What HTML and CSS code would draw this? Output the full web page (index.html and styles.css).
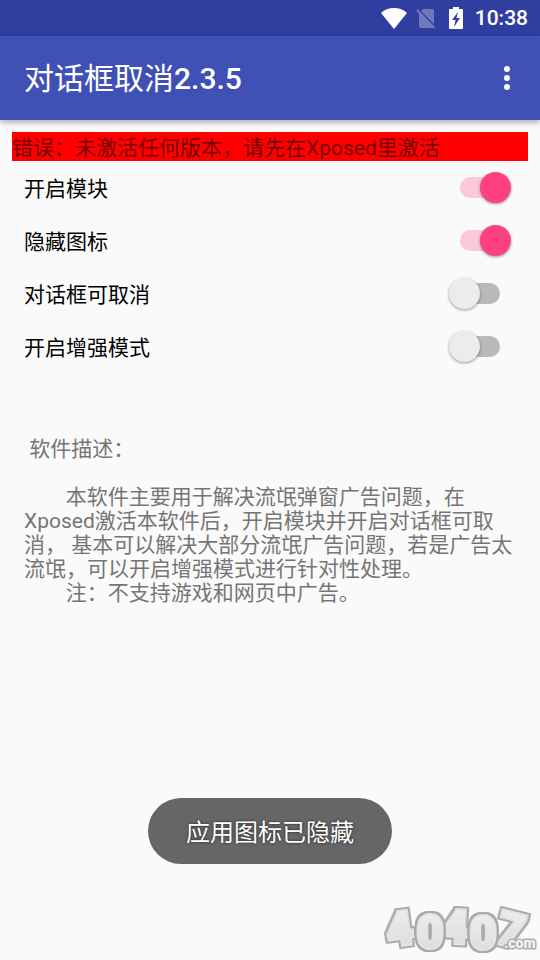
FILE: index.html
```html
<!DOCTYPE html>
<html lang="zh-CN">
<head>
<meta charset="utf-8">
<meta name="viewport" content="width=device-width, initial-scale=1">
<title>对话框取消2.3.5</title>
<link rel="stylesheet" href="styles.css">
</head>
<body>
<div class="status-bar">
  <svg class="wifi" viewBox="0 0 26 21" aria-hidden="true"><path d="M13 21 0 5Q5 0 13 0T26 5Z"/></svg>
  <svg class="no-sim" viewBox="0 0 20 21" aria-hidden="true"><path d="M7 1H16Q18 1 18 3V16L5 3ZM3 5 18 20H5Q3 20 3 18Z"/><path class="slash" d="M.8 2 18.5 20"/></svg>
  <svg class="battery" viewBox="0 0 14 22" aria-hidden="true"><path fill-rule="evenodd" d="M4 0H10V2H13Q14 2 14 3V21Q14 22 13 22H1Q0 22 0 21V3Q0 2 1 2H4ZM9 5 3 13H6.500L5 20 11 11H7.500Z"/></svg>
  <time class="clock">10:38</time>
</div>
<header class="app-bar">
  <h1 class="title">对话框取消<span class="version">2.3.5</span></h1>
  <button class="menu" type="button" aria-label="更多选项">
    <svg viewBox="0 0 6 24" aria-hidden="true"><circle cx="3" cy="3" r="3"/><circle cx="3" cy="12" r="3"/><circle cx="3" cy="21" r="3"/></svg>
  </button>
</header>
<main class="content">
  <p class="error">错误：未激活任何版本，请先在Xposed里激活</p>
  <div class="row"><label for="module">开启模块</label><input class="switch" id="module" type="checkbox" checked></div>
  <div class="row"><label for="hide-icon">隐藏图标</label><input class="switch" id="hide-icon" type="checkbox" checked></div>
  <div class="row"><label for="cancelable">对话框可取消</label><input class="switch" id="cancelable" type="checkbox"></div>
  <div class="row"><label for="enhanced">开启增强模式</label><input class="switch" id="enhanced" type="checkbox"></div>
  <p class="description"> 软件描述：

        本软件主要用于解决流氓弹窗广告问题，在Xposed激活本软件后，开启模块并开启对话框可取消， 基本可以解决大部分流氓广告问题，若是广告太流氓，可以开启增强模式进行针对性处理。
        注：不支持游戏和网页中广告。</p>
</main>
<div class="toast" role="status">应用图标已隐藏</div>
<svg class="brand" viewBox="0 0 160 60" role="img" aria-label="40407.com">
  <defs>
    <linearGradient id="silver" x1="0" y1="0" x2="0" y2="1">
      <stop offset="0" stop-color="#f0f0f0"/><stop offset="1" stop-color="#dadada"/>
    </linearGradient>
  </defs>
  <g class="digits">
    <text x="20" y="45" transform="rotate(-8 20 32)">4</text>
    <text x="75" y="43" transform="rotate(3 75 30)">4</text>
    <text x="131" y="46" transform="rotate(14 131 30)">7</text>
    <text x="50" y="48">0</text>
    <text x="103" y="49">0</text>
  </g>
  <text class="domain" x="124" y="48">.com</text>
</svg>
</body>
</html>
```
FILE: styles.css
```css
* {
  box-sizing: border-box;
}

body {
  position: relative;
  min-height: 100vh;
  margin: 0;
  background: #fafafa;
  color: #000;
  font: 21px/24px Roboto, "Noto Sans CJK SC", sans-serif;
}

.status-bar {
  display: flex;
  align-items: center;
  justify-content: flex-end;
  height: 36px;
  padding-right: 12px;
  background: #303f9f;
  color: #fff;
  fill: #fff;
}

.wifi {
  width: 26px;
  height: 21px;
  margin-right: 9px;
}

.no-sim {
  width: 20px;
  height: 21px;
  margin-right: 13px;
  opacity: .3;
}

.slash {
  stroke: #fff;
  stroke-width: 2;
}

.battery {
  width: 14px;
  height: 22px;
  margin-right: 12px;
}

.clock {
  font-weight: 500;
}

.app-bar {
  display: flex;
  align-items: center;
  justify-content: space-between;
  height: 84px;
  padding: 0 18px 0 24px;
  background: #3f51b5;
  color: #fff;
  box-shadow: 0 2px 6px rgba(0, 0, 0, .35);
}

.title {
  margin: 0;
  padding-top: 2px;
  font-size: 30px;
  line-height: 36px;
  font-weight: 400;
}

.version {
  font-weight: 500;
}

.menu {
  display: grid;
  place-items: center;
  width: 30px;
  height: 48px;
  padding: 0;
  border: 0;
  background: none;
}

.menu svg {
  width: 6px;
  height: 24px;
  fill: #fff;
}

.content {
  padding: 12px;
}

.error {
  margin: 0;
  padding: 4px 0 1px;
  background: #f00;
  color: #750000;
}

.row {
  display: flex;
  align-items: center;
  justify-content: space-between;
  height: 53px;
  padding: 0 17px 0 12px;
}

.row label {
  padding-top: 2px;
}

.switch {
  appearance: none;
  position: relative;
  width: 62px;
  height: 31px;
  margin: 0;
}

.switch::before,
.switch::after {
  content: "";
  position: absolute;
}

.switch::before {
  inset: 5px 11px;
  border-radius: 11px;
  background: #b9b9b9;
}

.switch::after {
  top: 0;
  left: 0;
  width: 31px;
  height: 31px;
  border-radius: 50%;
  background: #ececec;
  box-shadow: 0 1px 3px rgba(0, 0, 0, .4);
}

.switch:checked::before {
  background: #fbc9d9;
}

.switch:checked::after {
  left: 31px;
  background: #ff4081;
}

.description {
  margin: 64px 12px 0;
  color: #757575;
  white-space: pre-wrap;
}

.toast {
  position: absolute;
  bottom: 96px;
  left: 50%;
  padding: 20px 38px 16px;
  border-radius: 33px;
  background: #666;
  color: #fff;
  font-size: 24px;
  line-height: 30px;
  white-space: nowrap;
  text-shadow: 0 0 3px rgba(0, 0, 0, .7);
  transform: translateX(-50%);
}

.brand {
  position: absolute;
  right: 0;
  bottom: 0;
  width: 160px;
  height: 60px;
  overflow: visible;
}

.digits {
  fill: url(#silver);
  stroke: #e4e4e4;
  stroke-width: 4px;
  stroke-linejoin: miter;
  paint-order: stroke;
  font: 900 46px Roboto, sans-serif;
}

.digits text {
  text-anchor: middle;
  filter: drop-shadow(2px 0 0 #aaa) drop-shadow(-2px 0 0 #aaa) drop-shadow(0 2px 0 #aaa) drop-shadow(0 -2px 0 #aaa);
}

.domain {
  fill: #f2f2f2;
  stroke: #acacac;
  stroke-width: 3px;
  stroke-linejoin: round;
  paint-order: stroke;
  font: 900 14px Roboto, sans-serif;
}
```
